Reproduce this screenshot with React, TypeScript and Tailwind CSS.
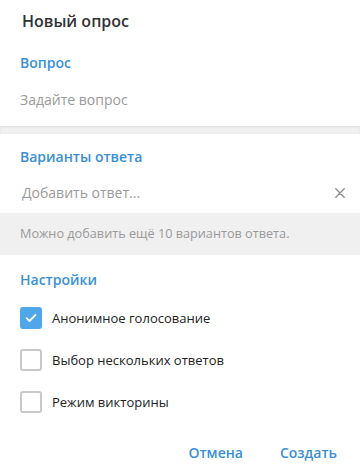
import { useState } from "react";

const font = { fontFamily: '"Open Sans", "Noto Sans", sans-serif' };

function Checkbox({ checked, label, onToggle }: { checked: boolean; label: string; onToggle: () => void }) {
  return (
    <button type="button" onClick={onToggle} className="flex h-[42px] items-center gap-[10px] text-left">
      {checked ? (
        <span className="flex h-[22px] w-[22px] items-center justify-center rounded-[3px] bg-[#4fa6e8]">
          <svg width="12" height="10" viewBox="0 0 12 10" fill="none">
            <path d="M1.5 5.2 4.5 8 10.5 1.8" stroke="#fff" strokeWidth="1.8" strokeLinecap="round" strokeLinejoin="round" />
          </svg>
        </span>
      ) : (
        <span className="h-[22px] w-[22px] rounded-[3px] border-2 border-[#c9c9c9] bg-white" />
      )}
      <span className="text-[13px] leading-[20px] text-[#222]">{label}</span>
    </button>
  );
}

export default function App() {
  const [opts, setOpts] = useState({ anon: true, multi: false, quiz: false });

  const toggle = (k: "anon" | "multi" | "quiz") => setOpts((p) => ({ ...p, [k]: !p[k] }));

  return (
    <div style={font} className="w-[360px] h-[476px] bg-white overflow-hidden">
      {/* Question */}
      <div className="bg-white px-[20px] h-[126px]">
        <div className="h-[42px] flex items-center pl-[2px] text-[16px] font-semibold text-[#333]">Новый опрос</div>
        <div className="h-[40px] flex items-center text-[14px] font-semibold text-[#3a8fd6]">Вопрос</div>
        <input
          placeholder="Задайте вопрос"
          className="h-[34px] w-full text-[14px] text-[#222] placeholder:text-[#9a9a9a] outline-none bg-transparent"
        />
      </div>

      <div className="h-[8px] bg-[#f0f0f0] shadow-[inset_0_1px_2px_rgba(0,0,0,0.08)]" />

      {/* Answers */}
      <div className="bg-white px-[20px]">
        <div className="h-[38px] pt-[13px] text-[14px] leading-[20px] font-semibold text-[#3a8fd6]">Варианты ответа</div>
        <div className="h-[41px] flex items-center justify-between">
          <input
            placeholder="Добавить ответ..."
            className="flex-1 pl-[2px] text-[14px] text-[#222] placeholder:text-[#9a9a9a] outline-none bg-transparent"
          />
          <button type="button" className="mr-[-10px] p-[5px]">
            <svg width="10" height="10" viewBox="0 0 10 10">
              <path d="M0.8 0.8 9.2 9.2M9.2 0.8 0.8 9.2" stroke="#8f8f8f" strokeWidth="1.4" strokeLinecap="round" />
            </svg>
          </button>
        </div>
      </div>

      <div className="h-[42px] bg-[#f0f0f0] px-[20px] flex items-center text-[12.7px] text-[#999]">
        Можно добавить ещё 10 вариантов ответа.
      </div>

      {/* Settings */}
      <div className="bg-white px-[20px]">
        <div className="pt-[15px] text-[14px] leading-[20px] font-semibold text-[#3a8fd6]">Настройки</div>
        <div className="mt-[7px] flex flex-col">
          <Checkbox checked={opts.anon} label="Анонимное голосование" onToggle={() => toggle("anon")} />
          <Checkbox checked={opts.multi} label="Выбор нескольких ответов" onToggle={() => toggle("multi")} />
          <Checkbox checked={opts.quiz} label="Режим викторины" onToggle={() => toggle("quiz")} />
        </div>
        <div className="mt-[8px] h-[42px] flex items-center justify-end gap-[37px] pr-[3px] text-[14px] font-semibold text-[#3a8fd6]">
          <button type="button">Отмена</button>
          <button type="button">Создать</button>
        </div>
      </div>
    </div>
  );
}
